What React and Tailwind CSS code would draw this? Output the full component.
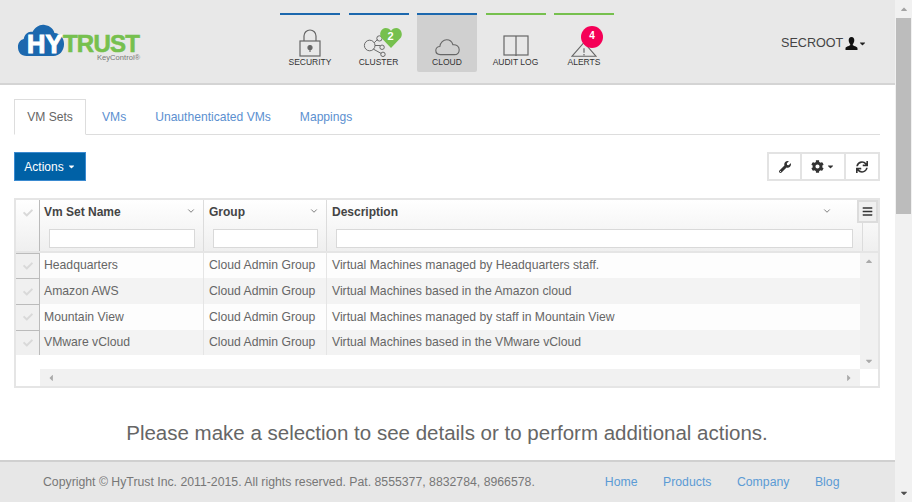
import React from 'react'
import { FaWrench, FaCog, FaSync, FaCheck, FaCaretDown, FaCaretUp, FaCaretLeft, FaCaretRight, FaBars } from 'react-icons/fa'
import { ChevronDown } from 'lucide-react'

const rows = [
  ['Headquarters', 'Cloud Admin Group', 'Virtual Machines managed by Headquarters staff.'],
  ['Amazon AWS', 'Cloud Admin Group', 'Virtual Machines based in the Amazon cloud'],
  ['Mountain View', 'Cloud Admin Group', 'Virtual Machines managed by staff in Mountain View'],
  ['VMware vCloud', 'Cloud Admin Group', 'Virtual Machines based in the VMware vCloud'],
]

function Logo() {
  return (
    <div className="relative w-[125px] h-[40px] ml-[17px] mt-[24px] shrink-0">
      <svg width="48" height="33" viewBox="0 0 50 33" preserveAspectRatio="none" className="absolute left-0 top-0">
        <path d="M10 32C4 32 1 28 1 23c0-4 2-7 6-8 1-5 5-8 9-7 3-5 8-8 13-7 6 1 9 4 10 8 6 0 10 5 10 11 0 7-5 12-11 12Z" fill="#1c68ae" />
      </svg>
      <span className="absolute left-[10px] top-[5px] text-[25.500px] leading-[30px] font-bold text-white [-webkit-text-stroke:1px_white]">HY</span>
      <span className="absolute left-[46px] top-[10px] text-[24px] leading-[19px] font-bold text-[#76c04e] tracking-[-0.8px] [-webkit-text-stroke:0.6px_#76c04e]">TRUST</span>
      <span className="absolute left-[80px] top-[30px] text-[7.600px] leading-[8px] text-[#777]">KeyControl®</span>
    </div>
  )
}

function NavItem({ label, color, active, children }) {
  return (
    <div className="flex flex-col w-[60px]">
      <div className={`h-[2px] ${color}`}></div>
      <div className={`relative h-[57px] flex flex-col items-center rounded-b-[2px] ${active ? 'bg-[#d0d0d0]' : ''}`}>
        <div className="h-[33px] mt-[9px] flex items-end justify-center">{children}</div>
        <span className="text-[8.500px] leading-[11px] text-[#333] whitespace-nowrap">{label}</span>
      </div>
    </div>
  )
}

function Check() {
  return <FaCheck className="text-[#d9d9d9] text-[10px]" />
}

function HeaderCell({ title, className, inputW, noBorder, chevMr = 'mr-[7px]', pad = 'pl-[4px]' }) {
  return (
    <div className={`${className} shrink-0 flex flex-col ${noBorder ? '' : 'border-r border-[#dcdcdc]'}`}>
      <div className={`flex items-center justify-between ${pad} h-[24px]`}>
        <span className="font-bold text-[12px] text-[#444] whitespace-nowrap">{title}</span>
        <ChevronDown size={10} className={`text-[#666] mb-[3px] ${chevMr}`} />
      </div>
      <div className={`${inputW} ml-[9px] mt-[5px] h-[19px] bg-white border border-[#d9d9d9]`}></div>
    </div>
  )
}

export default function App() {
  return (
    <div className="flex w-[912px] h-[502px] overflow-hidden bg-white font-['Liberation_Sans',Arial,sans-serif]">
      <div className="w-[895px] flex flex-col">
        {/* header */}
        <div className="h-[85px] shrink-0 flex bg-[#e8e8e8] border-b-2 border-[#d4d4d4]">
          <Logo />
          <div className="flex gap-[8.500px] ml-[138px] mt-[13px] h-[59px]">
            <NavItem label="SECURITY" color="bg-[#1c68ae]">
              <svg width="22" height="28" viewBox="0 0 22 28" fill="none" stroke="#666" strokeWidth="1.2">
                <rect x="1" y="12" width="20" height="15" />
                <path d="M5 12V7a6 6 0 0 1 12 0v5" />
                <circle cx="11" cy="18.500" r="2" fill="#666" />
                <path d="M11 19v4" />
              </svg>
            </NavItem>
            <NavItem label="CLUSTER" color="bg-[#1c68ae]">
              <svg width="26" height="23" viewBox="0 0 26 26" fill="none" stroke="#666" strokeWidth="1.1" className="ml-[-8px]">
                <circle cx="7" cy="13" r="6" />
                <circle cx="18" cy="5" r="3" />
                <circle cx="21" cy="15" r="2.500" />
                <circle cx="22" cy="23" r="2.500" />
                <path d="M12 10l4-4M13 13h6M11 17l9 5" />
              </svg>
              <div className="absolute left-[31px] top-[13px] w-[22px] h-[20px]">
                <svg width="22" height="20" viewBox="0 0 22 20" className="absolute left-0 top-0">
                  <path d="M11 20 1.500 10C-1 7 0 1 5.500 0c2.500 0 4.500 1 5.500 3 1-2 3-3 5.500-3C22 1 23 7 20.500 10Z" fill="#76c04e" />
                </svg>
                <span className="absolute inset-x-0 top-[2px] text-center text-[11px] leading-[13px] font-bold text-white">2</span>
              </div>
            </NavItem>
            <NavItem label="CLOUD" color="bg-[#1c68ae]" active>
              <svg width="27" height="18" viewBox="0 0 28 20" fill="none" stroke="#666" strokeWidth="1.2" className="mb-[1px]">
                <path d="M6 18.500c-3 0-5-2-5-4.500 0-2.500 2-4.500 4.500-4.500C6 5 9.500 2 13 2c3.500 0 6 2 7 5.500 4-.5 7 2 7 5.500s-2.500 5.500-5.500 5.500Z" />
              </svg>
            </NavItem>
            <NavItem label="AUDIT LOG" color="bg-[#76c04e]">
              <svg width="26" height="22" viewBox="0 0 26 22" fill="none" stroke="#666" strokeWidth="1.2">
                <rect x="1" y="1" width="24" height="19" />
                <path d="M13 1v20" />
              </svg>
            </NavItem>
            <NavItem label="ALERTS" color="bg-[#76c04e]">
              <svg width="26" height="16" viewBox="0 0 26 22" preserveAspectRatio="none" fill="none" stroke="#666" strokeWidth="1.2">
                <path d="M13 2 1 21h24Z" />
                <path d="M13 10v6M13 18v2" />
              </svg>
              <div className="absolute left-[27px] top-[11px] w-[22px] h-[22px] rounded-full bg-[#f50057] text-white text-[10px] leading-[20px] font-bold text-center">4</div>
            </NavItem>
          </div>
          <div className="flex items-center ml-[167px] h-[87px] text-[12.600px] text-[#444] whitespace-nowrap">
            SECROOT
            <svg width="13" height="13" viewBox="0 0 13 13" fill="#111" className="ml-[2px]">
              <path d="M6.500 0C4.500 0 3.700 1.500 3.700 3.300c0 1.800.8 3.200 1.500 3.900v1.100C3.500 9.300.5 9.700.5 11.500V13h12v-1.500c0-1.800-3-2.200-4.700-3.200V7.200c.7-.7 1.500-2.100 1.500-3.900C9.300 1.500 8.500 0 6.500 0Z" />
            </svg>
            <FaCaretDown className="text-[9px] text-[#222]" />
          </div>
        </div>

        {/* main */}
        <div className="flex-1 flex flex-col pl-[14px] pr-[15px]">
          <div className="flex h-[36px] mt-[14px] border-b border-[#ddd] text-[12.100px] text-[#5b8fd0]">
            <div className="w-[72px] h-[36px] pt-[1px] flex items-center justify-center bg-white border border-[#ddd] border-b-white text-[#666]">VM Sets</div>
            <div className="ml-[16px] h-[35px] pt-[1px] flex items-center">VMs</div>
            <div className="ml-[29px] h-[35px] pt-[1px] flex items-center">Unauthenticated VMs</div>
            <div className="ml-[29px] h-[35px] pt-[1px] flex items-center">Mappings</div>
          </div>

          <div className="flex justify-between mt-[17px] h-[29px]">
            <button className="w-[72px] h-[29px] flex items-center justify-center gap-[3px] bg-[#0061a6] border border-[#3a8ad0] text-white text-[12px]">
              Actions <FaCaretDown className="text-[9px]" />
            </button>
            <div className="flex h-[29px] border-2 border-[#e3e3e3] text-[#333]">
              <div className="w-[33px] flex items-center justify-center border-r-2 border-[#e3e3e3]"><FaWrench className="text-[12px]" /></div>
              <div className="w-[44px] flex items-center justify-center gap-[2px] border-r-2 border-[#e3e3e3]"><FaCog className="text-[13px]" /><FaCaretDown className="text-[9px]" /></div>
              <div className="w-[32px] flex items-center justify-center"><FaSync className="text-[12px]" /></div>
            </div>
          </div>

          {/* grid */}
          <div className="mt-[17px] h-[190px] border-2 border-[#e5e5e5] flex flex-col text-[12.200px]">
            <div className="flex h-[52.500px] shrink-0 bg-gradient-to-b from-white to-[#efefef] border-b-2 border-[#e5e5e5]">
              <div className="w-[24px] shrink-0 flex justify-center pt-[8px] border-r border-[#bbb]"><Check /></div>
              <HeaderCell title="Vm Set Name" className="w-[164px]" inputW="w-[146px]" />
              <HeaderCell title="Group" className="w-[123px]" inputW="w-[105px]" pad="pl-[5px]" />
              <HeaderCell title="Description" className="w-[530px]" inputW="w-[517px]" noBorder chevMr="mr-[25px]" pad="pl-[5px]" />
              <div className="flex-1 flex flex-col">
                <div className="h-[23px] border-2 border-[#dcdcdc] bg-[#f0f0f0] flex items-center justify-center"><FaBars className="text-[11px] text-[#333]" /></div>
                <div className="flex-1 border-l border-[#dcdcdc] ml-[5px]"></div>
              </div>
            </div>
            <div className="flex h-[116.500px] shrink-0">
              <div className="flex-1 flex flex-col">
                {rows.map((r, i) => (
                  <div key={r[0]} className={`flex h-[25.700px] text-[#666] ${i % 2 ? 'bg-[#f3f3f3]' : 'bg-[#fdfdfd]'}`}>
                    <div className="w-[24px] shrink-0 flex items-center justify-center bg-[#f0f0f0] border-r border-[#bbb] border-t border-t-[#bbb]"><Check /></div>
                    <div className="w-[164px] shrink-0 flex items-center pl-[4px] border-r border-[#e5e5e5] whitespace-nowrap">{r[0]}</div>
                    <div className="w-[123px] shrink-0 flex items-center pl-[5px] border-r border-[#e5e5e5] whitespace-nowrap">{r[1]}</div>
                    <div className="flex-1 flex items-center pl-[5px] whitespace-nowrap">{r[2]}</div>
                  </div>
                ))}
              </div>
              <div className="w-[18px] shrink-0 bg-[#f1f1f1] flex flex-col items-center justify-between py-[3px] text-[#aaa] text-[10px]">
                <FaCaretUp />
                <FaCaretDown />
              </div>
            </div>
            <div className="flex-1 flex">
              <div className="w-[24px] shrink-0"></div>
              <div className="flex-1 bg-[#f1f1f1] flex items-center justify-between px-[6px] text-[#aaa] text-[10px]">
                <FaCaretLeft />
                <FaCaretRight />
              </div>
              <div className="w-[18px] shrink-0"></div>
            </div>
          </div>

          <div className="mt-[33px] text-center text-[20.500px] leading-[24px] text-[#666] whitespace-nowrap">Please make a selection to see details or to perform additional actions.</div>
        </div>

        {/* footer */}
        <div className="h-[42px] shrink-0 flex items-center bg-[#e7e7e7] border-t-2 border-[#d0d0d0] text-[12.270px]">
          <span className="ml-[43px] text-[#777] whitespace-nowrap">Copyright © HyTrust Inc. 2011-2015. All rights reserved. Pat. 8555377, 8832784, 8966578.</span>
          <div className="flex ml-[70px] gap-[25.500px] text-[#5b9bd5] whitespace-nowrap">
            <span>Home</span>
            <span>Products</span>
            <span>Company</span>
            <span>Blog</span>
          </div>
        </div>
      </div>

      {/* page scrollbar */}
      <div className="w-[17px] shrink-0 bg-[#f1f1f1] flex flex-col items-center">
        <div className="h-[18px] flex items-center text-[#a3a3a3] text-[10px]"><FaCaretUp /></div>
        <div className="w-[15px] h-[196px] bg-[#bcbcbc]"></div>
        <div className="flex-1"></div>
        <div className="h-[18px] flex items-center text-[#505050] text-[10px]"><FaCaretDown /></div>
      </div>
    </div>
  )
}
